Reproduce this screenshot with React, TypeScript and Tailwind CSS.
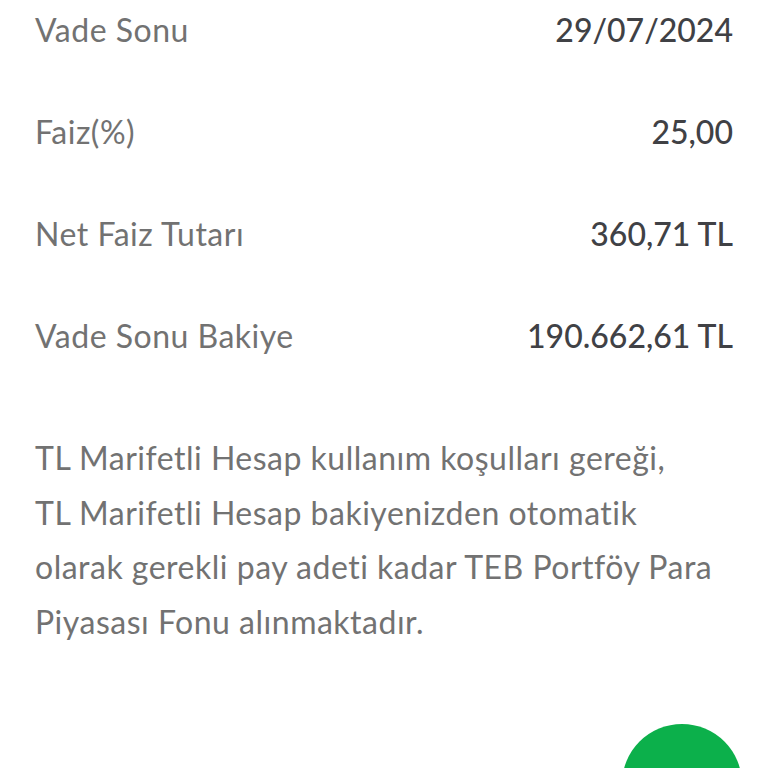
import React from "react";

const rows = [
  { label: "Vade Sonu", value: "29/07/2024" },
  { label: "Faiz(%)", value: "25,00" },
  { label: "Net Faiz Tutarı", value: "360,71 TL" },
  { label: "Vade Sonu Bakiye", value: "190.662,61 TL" },
];

const App = () => {
  return (
    <div
      className="relative h-[768px] w-[768px] overflow-hidden bg-white"
      style={{ fontFamily: "Lato, 'Noto Sans', sans-serif" }}
    >
      <div className="flex flex-col px-[35px] pt-[10px]">
        {/* Detail rows */}
        <div className="flex flex-col gap-[62px]">
          {rows.map((row) => (
            <div key={row.label} className="flex h-[40px] items-center justify-between">
              <span className="text-[32px] tracking-[0.5px] text-[#727272]">{row.label}</span>
              <span className="text-[32px] font-medium text-[#404145]">{row.value}</span>
            </div>
          ))}
        </div>

        {/* Info text */}
        <p className="mt-[75px] text-[32px] leading-[54.5px] tracking-[0.5px] text-[#727272]">
          TL Marifetli Hesap kullanım koşulları gereği,
          <br />
          TL Marifetli Hesap bakiyenizden otomatik
          <br />
          olarak gerekli pay adeti kadar TEB Portföy Para
          <br />
          Piyasası Fonu alınmaktadır.
        </p>
      </div>

      {/* Floating button */}
      <div className="absolute left-[622px] top-[724px] h-[120px] w-[120px] rounded-full bg-[#0cb04b]" />
    </div>
  );
};

export default App;
